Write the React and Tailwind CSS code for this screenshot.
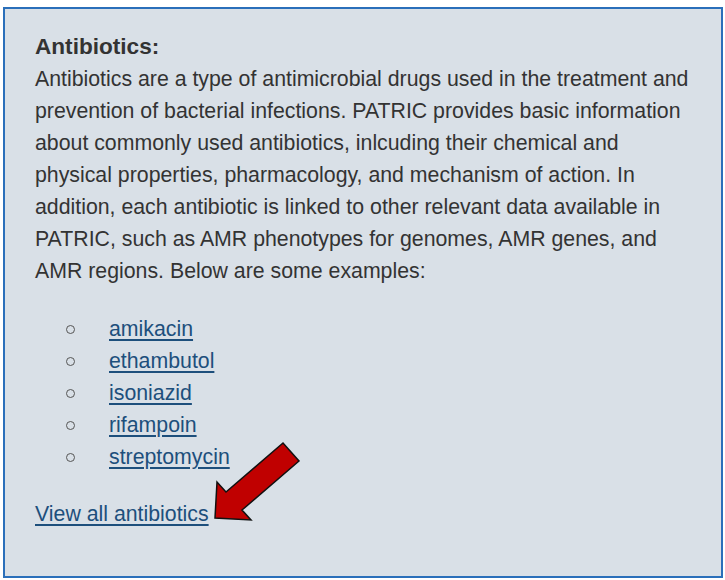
import React from 'react';

const drugs = ['amikacin', 'ethambutol', 'isoniazid', 'rifampoin', 'streptomycin'];

const Arrow = () => (
  <svg className="absolute left-0 top-0 pointer-events-none" width="725" height="580" viewBox="0 0 725 580">
    <polygon
      points="215,518 217,482 226,492 283,443 299,461 242,510 251,520"
      fill="#c00000"
      stroke="#111"
      strokeWidth="1.5"
      strokeLinejoin="miter"
    />
  </svg>
);

export default function App() {
  return (
    <div className="relative w-[725px] h-[580px] bg-white" style={{ fontFamily: '"Liberation Sans", Arial, sans-serif' }}>
      <div className="absolute left-[3px] top-[7px] w-[720px] h-[571px] border-2 border-[#2a6fba] bg-[#d9e0e7] pl-[30px] pr-2 pt-[22px] text-[21.3px] leading-[32px] text-[#333]">
        <h2 className="font-bold text-[22.6px]">Antibiotics:</h2>
        <p className="whitespace-nowrap">
          Antibiotics are a type of antimicrobial drugs used in the treatment and<br />
          prevention of bacterial infections. PATRIC provides basic information<br />
          about commonly used antibiotics, inlcuding their chemical and<br />
          physical properties, pharmacology, and mechanism of action. In<br />
          addition, each antibiotic is linked to other relevant data available in<br />
          PATRIC, such as AMR phenotypes for genomes, AMR genes, and<br />
          AMR regions. Below are some examples:
        </p>
        <ul className="mt-[26px] mb-[25px]">
          {drugs.map((d) => (
            <li key={d} className="flex items-center">
              <span className="ml-[31px] w-[9px] h-[9px] rounded-full border-[1.5px] border-[#555]"></span>
              <a href="#" className="ml-[34px] text-[#1d4f7c] underline underline-offset-[3px]">{d}</a>
            </li>
          ))}
        </ul>
        <a href="#" className="text-[#1d4f7c] underline underline-offset-[3px]">View all antibiotics</a>
      </div>
      <Arrow />
    </div>
  );
}
